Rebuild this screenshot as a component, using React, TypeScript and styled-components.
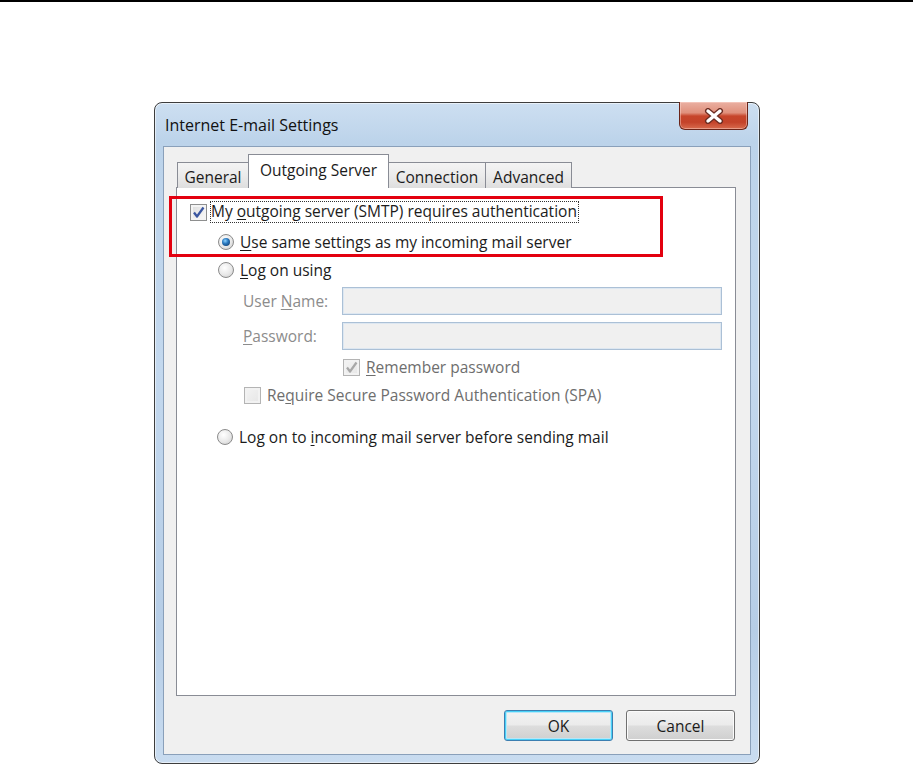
import styled, { createGlobalStyle, css } from 'styled-components';

const GlobalStyle = createGlobalStyle`
	html, body {
		margin: 0;
		padding: 0;
		background: #ffffff;
	}
	body {
		font-family: 'Open Sans', 'Noto Sans', 'DejaVu Sans', sans-serif;
		font-size: 15.5px;
		color: #1b1b1b;
	}
`;

const TABS = ['General', 'Outgoing Server', 'Connection', 'Advanced'];
const TAB_WIDTHS = [72, 141, 98, 87];

function CheckMark({ color }: { color: string }) {
	return (
		<svg width="13" height="13" viewBox="0 0 13 13">
			<path d="M2 6.5 L5 10.5 L11.5 1.5" fill="none" stroke={color} strokeWidth="2.2" strokeLinejoin="round" />
		</svg>
	);
}

function CloseGlyph() {
	return (
		<svg width="22" height="16" viewBox="0 0 22 16">
			<path d="M5 3 L17 13 M17 3 L5 13" stroke="#6b2c22" strokeWidth="6" strokeLinecap="round" />
			<path d="M5 3 L17 13 M17 3 L5 13" stroke="#ffffff" strokeWidth="3.4" strokeLinecap="round" />
		</svg>
	);
}

function App() {
	return (
		<>
			<GlobalStyle />
			<Page>
				<TopRule />
				<Stage>
					<Window>
						<TitleBar>
							<Title>Internet E-mail Settings</Title>
							<CloseButton aria-label="Close">
								<CloseGlyph />
							</CloseButton>
						</TitleBar>

						<Client>
							<TabStrip>
								{TABS.map((t, i) => (
									<Tab key={t} $active={i === 1} $width={TAB_WIDTHS[i]}>
										{t}
									</Tab>
								))}
							</TabStrip>

							<Panel>
								<Row $top={14} $indent={13}>
									<CheckBox $checked>
										<CheckMark color="#3a56a0" />
									</CheckBox>
									<FocusLabel>
										My <u>o</u>utgoing server (SMTP) requires authentication
									</FocusLabel>
								</Row>

								<Row $top={10} $indent={41}>
									<Radio $checked />
									<Label>
										<u>U</u>se same settings as my incoming mail server
									</Label>
								</Row>

								<Row $top={8} $indent={41}>
									<Radio />
									<Label>
										<u>L</u>og on using
									</Label>
								</Row>

								<Row $top={7} $indent={66} $height={28}>
									<FieldLabel>
										User <u>N</u>ame:
									</FieldLabel>
									<Field />
								</Row>

								<Row $top={7} $indent={66} $height={28}>
									<FieldLabel>
										<u>P</u>assword:
									</FieldLabel>
									<Field />
								</Row>

								<Row $top={7} $indent={166}>
									<CheckBox $checked $disabled>
										<CheckMark color="#a8a8a8" />
									</CheckBox>
									<Label $disabled>
										<u>R</u>emember password
									</Label>
								</Row>

								<Row $top={8} $indent={67}>
									<CheckBox $disabled />
									<Label $disabled>
										Re<u>q</u>uire Secure Password Authentication (SPA)
									</Label>
								</Row>

								<Row $top={22} $indent={40}>
									<Radio />
									<Label>
										Log on to <u>i</u>ncoming mail server before sending mail
									</Label>
								</Row>
							</Panel>

							<ButtonRow>
								<DialogButton $default>OK</DialogButton>
								<DialogButton>Cancel</DialogButton>
							</ButtonRow>

							<Highlight />
						</Client>
					</Window>
				</Stage>
			</Page>
		</>
	);
}

const Page = styled.div`
	width: 913px;
	height: 766px;
	overflow: hidden;
	display: flex;
	flex-direction: column;
`;

const TopRule = styled.div`
	height: 2px;
	background: #000;
`;

const Stage = styled.div`
	padding: 100px 0 0 154px;
`;

const Window = styled.div`
	width: 606px;
	height: 662px;
	box-sizing: border-box;
	border: 1px solid #3d3d3d;
	border-radius: 8px;
	padding: 0 8px 8px 8px;
	display: flex;
	flex-direction: column;
	background: linear-gradient(
		180deg,
		#cddff1 0%,
		#bcd3ea 6%,
		#c3d8ee 40%,
		#b6cde6 80%,
		#c9dcf0 100%
	);
	box-shadow: inset 0 0 0 1px rgba(255, 255, 255, 0.55);
`;

const TitleBar = styled.div`
	height: 43px;
	display: flex;
	align-items: center;
	padding-left: 2px;
`;

const Title = styled.div`
	font-size: 16px;
	color: #111;
`;

const CloseButton = styled.div`
	align-self: flex-start;
	margin-left: auto;
	margin-right: 3px;
	margin-top: -1px;
	width: 69px;
	height: 28px;
	box-sizing: border-box;
	border: 1px solid #6b2418;
	border-top: none;
	border-radius: 0 0 6px 6px;
	display: flex;
	align-items: center;
	justify-content: center;
	background: linear-gradient(
		180deg,
		#eab0a2 0%,
		#e0907c 40%,
		#c7452b 52%,
		#c4432a 75%,
		#d86b4e 100%
	);
	box-shadow: inset 0 0 0 1px rgba(255, 220, 210, 0.45);
`;

const Client = styled.div`
	position: relative;
	flex: 1;
	background: #f0f0f0;
	border: 1px solid #8aa0ba;
	padding: 9px 0 0 12px;
	display: flex;
	flex-direction: column;
`;

const TabStrip = styled.div`
	display: flex;
	align-items: flex-end;
	height: 32px;
	margin-bottom: -1px;
	padding-left: 1px;
	position: relative;
	z-index: 1;
`;

const Tab = styled.div<{ $active?: boolean; $width: number }>`
	width: ${p => p.$width}px;
	box-sizing: border-box;
	display: flex;
	align-items: center;
	justify-content: center;
	border: 1px solid #898c95;
	border-bottom: none;
	margin-right: -1px;
	white-space: nowrap;
	${p =>
		p.$active
			? css`
					height: 34px;
					background: #ffffff;
					padding-bottom: 4px;
					position: relative;
					z-index: 2;
			  `
			: css`
					height: 26px;
					background: linear-gradient(180deg, #f4f4f4 0%, #ebebeb 50%, #dedede 100%);
					padding-top: 2px;
			  `}
`;

const Panel = styled.div`
	width: 560px;
	height: 509px;
	box-sizing: border-box;
	background: #ffffff;
	border: 1px solid #898c95;
	display: flex;
	flex-direction: column;
`;

const Row = styled.div<{ $top: number; $indent: number; $height?: number }>`
	display: flex;
	align-items: center;
	height: ${p => p.$height ?? 20}px;
	margin-top: ${p => p.$top}px;
	padding-left: ${p => p.$indent}px;
	white-space: nowrap;

	u {
		text-decoration: underline;
		text-underline-offset: 2px;
	}
`;

const CheckBox = styled.div<{ $checked?: boolean; $disabled?: boolean }>`
	width: 17px;
	height: 17px;
	box-sizing: border-box;
	flex-shrink: 0;
	display: flex;
	align-items: center;
	justify-content: center;
	border: 1px solid ${p => (p.$disabled ? '#b4b4b4' : '#8e8f8f')};
	background: ${p =>
		p.$disabled
			? 'linear-gradient(135deg, #f4f4f4, #e6e6e6)'
			: 'linear-gradient(135deg, #dcdcdc, #fbfbfb)'};
	box-shadow: inset 0 0 0 2px ${p => (p.$disabled ? '#f2f2f2' : '#f4f4f4')};
`;

const Radio = styled.div<{ $checked?: boolean }>`
	width: 16px;
	height: 16px;
	box-sizing: border-box;
	flex-shrink: 0;
	border-radius: 50%;
	border: 1px solid #8b8b8b;
	position: relative;
	background: radial-gradient(circle at 40% 35%, #ffffff 0%, #e8e8e8 55%, #c9c9c9 100%);

	${p =>
		p.$checked &&
		css`
			&::after {
				content: '';
				position: absolute;
				left: 3px;
				top: 3px;
				width: 8px;
				height: 8px;
				border-radius: 50%;
				background: radial-gradient(circle at 40% 35%, #8fd3ff 0%, #2a79c0 40%, #0d2e5a 100%);
			}
		`}
`;

const Label = styled.span<{ $disabled?: boolean }>`
	margin-left: 6px;
	color: ${p => (p.$disabled ? '#6e6e6e' : '#1b1b1b')};
`;

const FocusLabel = styled.span`
	margin-left: 4px;
	padding: 0 1px 1px 0;
	outline: 1px dotted #333;
	outline-offset: 0;
	line-height: 19px;
`;

const FieldLabel = styled.span`
	width: 99px;
	color: #8c8c8c;
`;

const Field = styled.div`
	width: 380px;
	height: 28px;
	box-sizing: border-box;
	background: #f0f0f0;
	border: 1px solid #abc0d6;
	box-shadow: inset 0 0 0 1px #dde7f1;
`;

const ButtonRow = styled.div`
	display: flex;
	justify-content: flex-end;
	gap: 13px;
	width: 559px;
	margin-top: 14px;
`;

const DialogButton = styled.div<{ $default?: boolean }>`
	width: 109px;
	height: 31px;
	box-sizing: border-box;
	display: flex;
	align-items: center;
	justify-content: center;
	border-radius: 3px;
	color: #1b1b1b;
	background: linear-gradient(180deg, #f3f3f3 0%, #ebebeb 48%, #dddddd 52%, #cfcfcf 100%);
	border: 1px solid ${p => (p.$default ? '#3c7fb1' : '#707070')};
	box-shadow: ${p =>
		p.$default
			? 'inset 0 0 0 1px #48d0f7, inset 0 0 0 2px #b7e7f8'
			: 'inset 0 0 0 1px #fbfbfb'};
`;

const Highlight = styled.div`
	position: absolute;
	left: 5px;
	top: 49px;
	width: 494px;
	height: 61px;
	box-sizing: border-box;
	border: 3px solid #e3000f;
	pointer-events: none;
	z-index: 3;
`;

export default App;
